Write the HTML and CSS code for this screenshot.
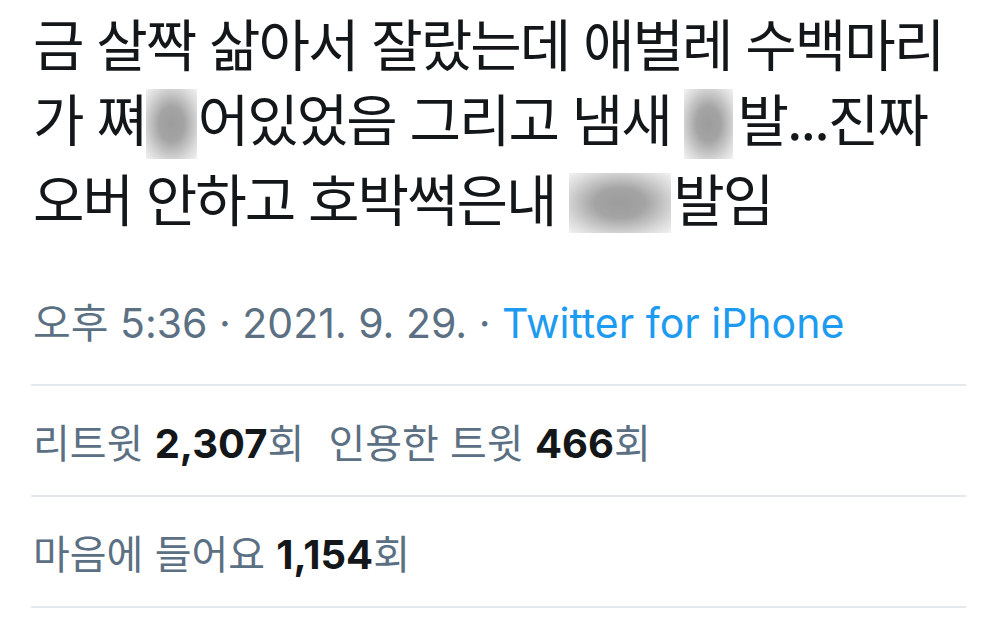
FILE: index.html
```html
<!DOCTYPE html>
<html lang="ko">
<head>
<meta charset="utf-8">
<link rel="stylesheet" href="styles.css">
</head>
<body>
<main class="tweet">
  <p class="text">금 살짝 삶아서 잘랐는데 애벌레 수백마리<br>가 쪄<span class="blur b1"></span>어있었음 그리고 냄새 <span class="blur b2"></span>발...진짜<br>오버 안하고 호박썩은내 <span class="blur b3"></span>발임</p>
  <div class="meta"><span>오후 5:36 · 2021. 9. 29. · </span><a class="source">Twitter for iPhone</a></div>
  <div class="stat"><span>리트윗 <b>2,307</b>회</span><span>인용한 트윗 <b>466</b>회</span></div>
  <div class="stat"><span>마음에 들어요 <b>1,154</b>회</span></div>
</main>
</body>
</html>
```

FILE: styles.css
```css
html, body {
  margin: 0;
  padding: 0;
  background: #ffffff;
}
.tweet {
  width: 935px;
  margin-left: 31px;
  font-family: "Noto Sans CJK KR", "Noto Sans", sans-serif;
}
.text {
  margin: 0;
  padding: 4px 0 0 2px;
  font-size: 56px;
  letter-spacing: -2px;
  line-height: 75px;
  color: #14171a;
}
.blur {
  display: inline-block;
  height: 70px;
  vertical-align: -18px;
  background: radial-gradient(ellipse at center, #9c9c9c 0%, #a4a4a4 35%, #d8d8d8 75%, #f3f3f3 100%);
}
.b1 { width: 51px; margin: 0 1px 0 0; }
.b2 { width: 49px; margin-right: 4px; }
.b3 { width: 102px; margin-right: 2px; height: 60px; vertical-align: -12px; }
.meta {
  padding: 65px 0 37px 2px;
  line-height: 48px;
  border-bottom: 2px solid #e3e9ee;
  font-family: "Inter", "Noto Sans CJK KR", sans-serif;
  font-size: 41px;
  color: #5b7083;
}
.source {
  color: #1d9bf0;
}
.stat {
  display: flex;
  gap: 24px;
  height: 109px;
  align-items: center;
  padding-left: 2px;
  border-bottom: 2px solid #e3e9ee;
  font-family: "Inter", "Noto Sans CJK KR", sans-serif;
  font-size: 40px;
  color: #5b7083;
}
.stat b {
  color: #14171a;
  font-weight: 700;
}
```
